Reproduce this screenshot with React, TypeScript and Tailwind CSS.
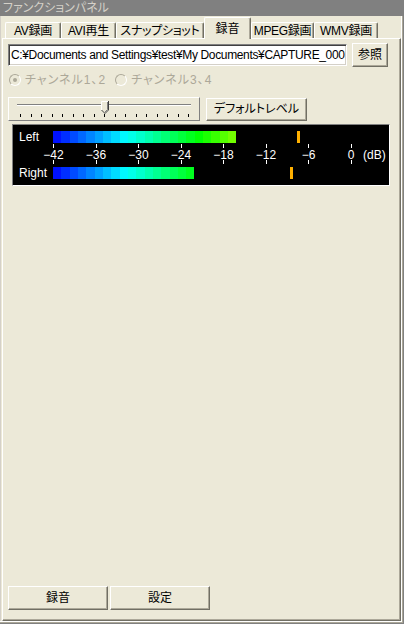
import React from 'react';

// XP クラシック風の「ファンクションパネル」録音タブ
const FONT = "font-['Liberation_Sans','Noto_Sans_CJK_JP',sans-serif] [font-feature-settings:'palt']";

const TABS = [
  { label: 'AV録画', w: 'w-[56px]' },
  { label: 'AVI再生', w: 'w-[55px]' },
  { label: 'スナップショット', w: 'w-[88px]' },
  { label: '録音', w: 'w-[47px]', active: true },
  { label: 'MPEG録画', w: 'w-[63px]' },
  { label: 'WMV録画', w: 'w-[64px]' },
];

const SCALE = ['−42', '−36', '−30', '−24', '−18', '−12', '−6', '0'];

const raised =
  'border border-t-white border-l-white border-r-[#716f64] border-b-[#716f64] shadow-[inset_-1px_-1px_0_#aca899] bg-[#ece9d8]';

function Btn({ label, className }: { label: string; className: string }) {
  return (
    <div className={`${raised} flex items-center justify-center text-[12px] leading-none text-black ${className}`}>
      {label}
    </div>
  );
}

function Radio({ checked, label }: { checked?: boolean; label: string }) {
  return (
    <div className="flex items-center gap-[4px]">
      <div className="w-[12px] h-[12px] rounded-full border border-t-[#aca899] border-l-[#aca899] border-r-white border-b-white bg-[#ece9d8] flex items-center justify-center">
        {checked && <div className="w-[4px] h-[4px] rounded-full bg-[#aca899]" />}
      </div>
      <span className="text-[12px] leading-none tracking-[1px] text-[#aca899]">{label}</span>
    </div>
  );
}

function LevelBar({ segments, width }: { segments: number; width: string }) {
  return (
    <div className={`flex h-[12px] overflow-hidden ${width}`}>
      {Array.from({ length: segments }).map((_, i) => (
        <div
          key={i}
          className="w-[8.33px] h-full shrink-0"
          style={{ backgroundColor: `hsl(${236 - i * 6.8}, 100%, 50%)` }}
        />
      ))}
    </div>
  );
}

function Meter() {
  return (
    <div className="ml-[4px] w-[378px] h-[62px] border border-t-[#808080] border-l-[#808080] border-r-white border-b-white bg-black relative text-white text-[12px] leading-none">
      <span className="absolute left-[6px] top-[6px]">Left</span>
      <div className="absolute left-[40px] top-[6px]">
        <LevelBar segments={22} width="w-[183px]" />
      </div>
      <div className="absolute left-[284px] top-[6px] w-[3px] h-[12px] bg-[#ffb000]" />

      {SCALE.map((s, i) => {
        const x = 40 + i * 42.5;
        return (
          <React.Fragment key={s}>
            <div className="absolute top-[19px] w-px h-[4px] bg-white" style={{ left: x }} />
            <span className="absolute top-[24px] -translate-x-1/2" style={{ left: x + 0.5 }}>
              {s}
            </span>
            <div className="absolute top-[35px] w-px h-[4px] bg-white" style={{ left: x }} />
          </React.Fragment>
        );
      })}
      <span className="absolute left-[350px] top-[24px]">(dB)</span>

      <span className="absolute left-[6px] top-[42px]">Right</span>
      <div className="absolute left-[40px] top-[42px]">
        <LevelBar segments={17} width="w-[141px]" />
      </div>
      <div className="absolute left-[277px] top-[42px] w-[3px] h-[12px] bg-[#ffb000]" />
    </div>
  );
}

function Slider() {
  return (
    <div className="w-[192px] h-[24px] border border-t-white border-l-white border-r-[#808080] border-b-[#808080] flex flex-col">
      <div className="relative h-[14px] mx-[8px]">
        <div className="absolute left-0 right-0 top-[6px] h-[2px] border-t border-t-[#808080] border-b border-b-white" />
        <svg className="absolute left-[84px] top-[3px]" width="8" height="13" viewBox="0 0 8 13">
          <polygon points="0.5,0.5 7.5,0.5 7.5,9 4,12.5 0.5,9" fill="#ece9d8" />
          <polyline points="0.5,9 0.5,0.5 7,0.5" fill="none" stroke="#ffffff" strokeWidth="1" />
          <polyline points="7.5,0 7.5,9 4,12.5 0.5,9" fill="none" stroke="#404040" strokeWidth="1" />
          <polyline points="6.5,1 6.5,8.5 4,11" fill="none" stroke="#808080" strokeWidth="1" />
        </svg>
      </div>
      <div className="flex justify-between ml-[11px] mr-[10px] mt-[2px]">
        {Array.from({ length: 17 }).map((_, i) => (
          <div key={i} className="w-px h-[3px] bg-black" />
        ))}
      </div>
    </div>
  );
}

export default function App() {
  return (
    <div
      className={`w-[404px] h-[624px] bg-[#ece9d8] flex flex-col overflow-hidden text-black ${FONT} shadow-[inset_-1px_-1px_0_#808080,inset_-2px_-2px_0_#aca899,inset_-3px_-3px_0_#ffffff,inset_1px_0_0_#d4d0c8]`}
    >
      <div className="h-[16px] shrink-0 bg-[#808080] text-[#d4d0c8] text-[12px] leading-[16px] pl-[3px]">
        ファンクションパネル
      </div>

      <div className="flex-1 flex flex-col pl-[2px] pr-[3px] pb-[3px] min-h-0">
        <div className="h-[22px] shrink-0 flex items-end pl-[3px] relative z-10">
          {TABS.map((t) =>
            t.active ? (
              <div
                key={t.label}
                className={`${t.w} h-[22px] -mb-[1px] bg-[#ece9d8] border-t border-l border-t-white border-l-white border-r border-r-[#716f64] shadow-[inset_-1px_0_0_#aca899] rounded-t-[2px] flex justify-center pt-[4px] text-[12px] leading-[14px]`}
              >
                {t.label}
              </div>
            ) : (
              <div
                key={t.label}
                className={`${t.w} h-[16px] border-t border-l border-t-white border-l-white border-r border-r-[#716f64] shadow-[inset_-1px_0_0_#aca899] rounded-t-[2px] flex items-center justify-center text-[12px] leading-none tracking-[-0.3px] whitespace-nowrap`}
              >
                {t.label}
              </div>
            )
          )}
        </div>

        <div className="flex-1 flex flex-col border-t border-l border-t-white border-l-white border-r border-b border-r-[#716f64] border-b-[#716f64] shadow-[inset_-1px_-1px_0_#aca899] pl-[5px] pt-[4px] pb-[10px]">
          <div className="flex items-center h-[24px] gap-[5px]">
            <div className="w-[339px] h-[22px] bg-white border border-t-[#808080] border-l-[#808080] border-r-white border-b-white shadow-[inset_1px_1px_0_#404040,inset_-1px_-1px_0_#d4d0c8] flex items-center pl-[2px]">
              <span className="block w-full overflow-hidden whitespace-nowrap text-[12px] leading-[14px] tracking-[-0.35px]">
                C:¥Documents and Settings¥test¥My Documents¥CAPTURE_000
              </span>
            </div>
            <Btn label="参照" className="w-[36px] h-[24px]" />
          </div>

          <div className="flex items-center h-[14px] mt-[6px] ml-[1px] gap-[9px]">
            <Radio checked label="チャンネル1、2" />
            <Radio label="チャンネル3、4" />
          </div>

          <div className="flex items-center h-[24px] mt-[10px] gap-[6px]">
            <Slider />
            <Btn label="デフォルトレベル" className="w-[101px] h-[23px]" />
          </div>

          <div className="mt-[3px]">
            <Meter />
          </div>

          <div className="mt-auto flex gap-[2px]">
            <Btn label="録音" className="w-[100px] h-[24px]" />
            <Btn label="設定" className="w-[100px] h-[24px]" />
          </div>
        </div>
      </div>
    </div>
  );
}
